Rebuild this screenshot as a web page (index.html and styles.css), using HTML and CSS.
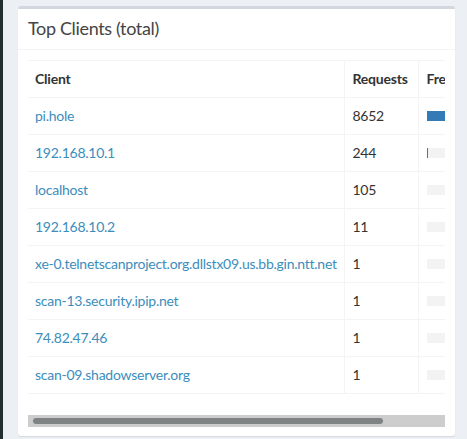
FILE: index.html
```html
<!DOCTYPE html>
<html>
<head>
<meta charset="utf-8">
<link rel="stylesheet" href="styles.css">
</head>
<body>
<div class="sidebar"></div>
<div class="content">
  <div class="box">
    <div class="box-header"><h3 class="box-title">Top Clients (total)</h3></div>
    <div class="box-body">
      <div class="scroll">
        <table class="clients">
          <thead>
            <tr><th class="c-client">Client</th><th class="c-req">Requests</th><th class="c-freq">Frequency</th></tr>
          </thead>
          <tbody>
            <tr><td><a href="#">pi.hole</a></td><td>8652</td><td><div class="bar"><div class="fill" style="width:100%"></div></div></td></tr>
            <tr><td><a href="#">192.168.10.1</a></td><td>244</td><td><div class="bar"><div class="fill" style="width:1px"></div></div></td></tr>
            <tr><td><a href="#">localhost</a></td><td>105</td><td><div class="bar"><div class="fill" style="width:0"></div></div></td></tr>
            <tr><td><a href="#">192.168.10.2</a></td><td>11</td><td><div class="bar"><div class="fill" style="width:0"></div></div></td></tr>
            <tr><td><a href="#">xe-0.telnetscanproject.org.dllstx09.us.bb.gin.ntt.net</a></td><td>1</td><td><div class="bar"><div class="fill" style="width:0"></div></div></td></tr>
            <tr><td><a href="#">scan-13.security.ipip.net</a></td><td>1</td><td><div class="bar"><div class="fill" style="width:0"></div></div></td></tr>
            <tr><td><a href="#">74.82.47.46</a></td><td>1</td><td><div class="bar"><div class="fill" style="width:0"></div></div></td></tr>
            <tr><td><a href="#">scan-09.shadowserver.org</a></td><td>1</td><td><div class="bar"><div class="fill" style="width:0"></div></div></td></tr>
          </tbody>
        </table>
      </div>
      <div class="hscroll"><div class="thumb"></div></div>
    </div>
  </div>
</div>
</body>
</html>
```
FILE: styles.css
```css
* { box-sizing: border-box; }
html, body { margin: 0; padding: 0; }
body {
  width: 467px;
  height: 439px;
  overflow: hidden;
  background: #ecf0f5;
  display: flex;
  font-family: "Lato", "Noto Sans", sans-serif;
  font-size: 14px;
  color: #333;
}
.sidebar { width: 3px; background: #222d32; flex: none; }
.content { padding: 6px 0 0 15px; }
.box {
  width: 437px;
  background: #fff;
  border-top: 3px solid #d2d6de;
  border-radius: 3px;
  box-shadow: 0 1px 1px rgba(0,0,0,0.1);
}
.box-header {
  height: 41px;
  padding: 10px 10px 0;
  border-bottom: 1px solid #f4f4f4;
}
.box-title {
  margin: 0;
  font-size: 18px;
  line-height: 18px;
  font-weight: 400;
  color: #444;
  letter-spacing: -0.35px;
}
.box-body { padding: 10px 10px 9px; }
.scroll { width: 417px; overflow: hidden; }
.clients {
  border-collapse: collapse;
  table-layout: fixed;
  width: 500px;
  border-top: 1px solid #f4f4f4;
}
.clients th, .clients td {
  padding: 8px 8px 8px 7px;
  line-height: 20px;
  height: 37px;
  text-align: left;
  border-bottom: 1px solid #f4f4f4;
  white-space: nowrap;
  vertical-align: top;
  letter-spacing: -0.25px;
}
.clients th { font-weight: 700; color: #333; letter-spacing: -0.2px; }
.clients th + th, .clients td + td { border-left: 1px solid #f4f4f4; padding-left: 8px; }
.c-client { width: 316px; }
.c-req { width: 74px; }
.c-freq { width: 110px; }
.clients a { color: #3c8dbc; text-decoration: none; }
.bar {
  margin-top: 5px;
  height: 10px;
  background: #f3f3f3;
  width: 90px;
}
.fill { height: 100%; background: #337ab7; }
.hscroll {
  margin-top: 21px;
  width: 417px;
  height: 12px;
  background: #cdcdcd;
  padding: 3px 0 0 5px;
}
.thumb {
  width: 350px;
  height: 6px;
  border-radius: 3px;
  background: #7f8383;
}
```
